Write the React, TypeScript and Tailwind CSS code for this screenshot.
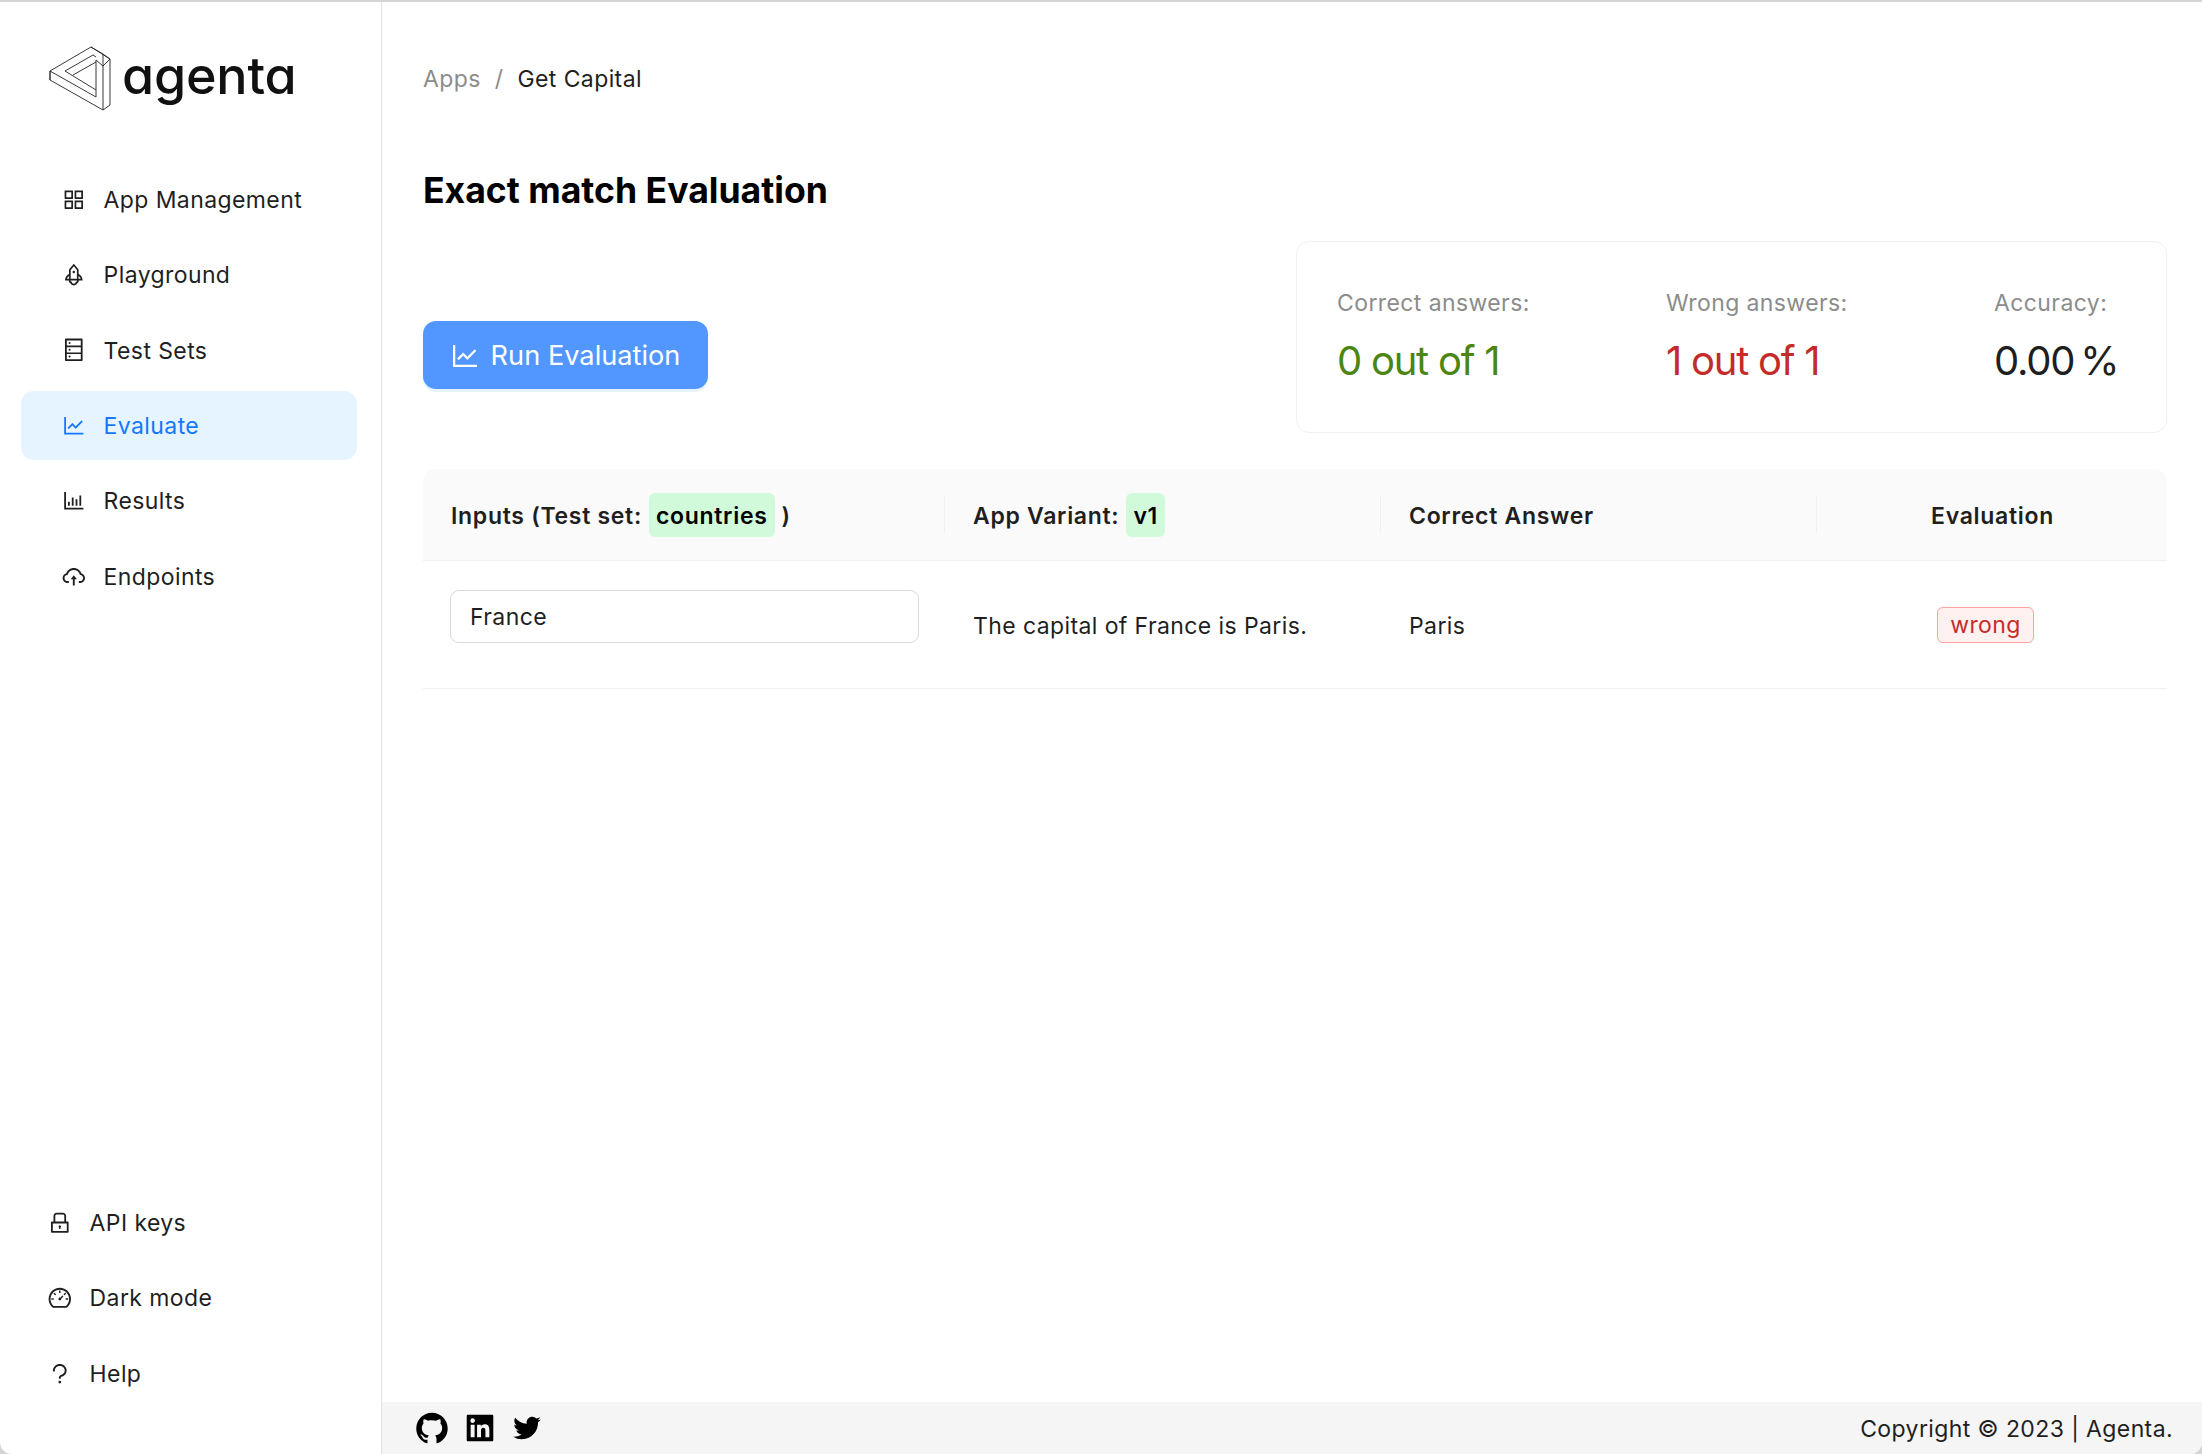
import type { ReactNode } from 'react';
import {
  AiOutlineAppstore,
  AiOutlineRocket,
  AiOutlineDatabase,
  AiOutlineLineChart,
  AiOutlineBarChart,
  AiOutlineCloudUpload,
  AiOutlineLock,
  AiOutlineDashboard,
  AiOutlineQuestion,
  AiOutlineGithub,
  AiFillLinkedin,
  AiOutlineTwitter,
} from 'react-icons/ai';

const topItems = [
  { label: 'App Management', icon: AiOutlineAppstore },
  { label: 'Playground', icon: AiOutlineRocket },
  { label: 'Test Sets', icon: AiOutlineDatabase },
  { label: 'Evaluate', icon: AiOutlineLineChart, active: true },
  { label: 'Results', icon: AiOutlineBarChart },
  { label: 'Endpoints', icon: AiOutlineCloudUpload },
];

const bottomItems = [
  { label: 'API keys', icon: AiOutlineLock },
  { label: 'Dark mode', icon: AiOutlineDashboard },
  { label: 'Help', icon: AiOutlineQuestion },
];

function Logo() {
  return (
    <div className="flex h-[66px] items-center gap-[11px] pl-[49px]">
      <svg viewBox="49 46 62 65" className="h-[65px] w-[62px] shrink-0" fill="none" stroke="#222" strokeWidth="0.9">
        <path d="M50 71 91 47 110 59V105L103 110 50 80Z" />
        <path d="M50 71 96 97V60M103 110V66L110 59M91 47 103 54 103 66M103 54 110 59M65 71 96 90M65 71 93 55 96 57M50 71 50 80M73 75 96 62M96 60 103 66" />
      </svg>
      <span className="-mt-[5px] text-[52px] leading-none font-medium tracking-[-0.2px] text-[#111] [font-feature-settings:'cv11']">
        agenta
      </span>
    </div>
  );
}

function MenuItem({ label, icon: Icon, active, compact }: { label: string; icon: typeof AiOutlineLock; active?: boolean; compact?: boolean }) {
  return (
    <div
      className={`flex h-[69px] items-center gap-[17px] rounded-[13px] ${compact ? 'pl-[26px]' : 'pl-[40px]'} ${
        active ? 'bg-[#e6f4ff] text-[#1677ff]' : 'text-[#1f1f1f]'
      }`}
    >
      <Icon className="size-[25.6px] shrink-0" />
      <span className="pt-px">{label}</span>
    </div>
  );
}

function HeaderCell({ children, className = '', divider = true }: { children: ReactNode; className?: string; divider?: boolean }) {
  return (
    <div className={`relative flex items-center pt-[3px] pl-[28px] ${className}`}>
      {children}
      {divider && <span className="absolute top-[27px] right-0 h-[37px] w-px bg-[#f0f0f0]" />}
    </div>
  );
}

function Stat({ label, value, color }: { label: string; value: string; color: string }) {
  return (
    <div>
      <div className="text-[23px] leading-[36px] tracking-[0.4px] text-[#8c8c8c]">{label}</div>
      <div className={`mt-[14px] text-[40px] leading-[52px] tracking-[-1.25px] ${color}`}>{value}</div>
    </div>
  );
}

export default function App() {
  return (
    <div className="h-screen w-full bg-[#d4d4d4] pt-[2px] font-['Inter',sans-serif] text-[23px] tracking-[0.4px] text-[#1f1f1f]">
      <div className="flex h-full overflow-hidden rounded-b-[12px] bg-white">
        {/* Sidebar */}
        <aside className="flex w-[382px] shrink-0 flex-col border-r border-[#e2e2e2] pt-[43px] pr-[24px] pb-[46px] pl-[21px]">
          <div className="-ml-[21px]">
            <Logo />
          </div>
          <nav className="mt-[54px] flex flex-col gap-[6.4px]">
            {topItems.map((item) => (
              <MenuItem key={item.label} {...item} />
            ))}
          </nav>
          <nav className="mt-auto flex flex-col gap-[6.4px]">
            {bottomItems.map((item) => (
              <MenuItem key={item.label} {...item} compact />
            ))}
          </nav>
        </aside>

        {/* Main */}
        <main className="flex min-w-0 flex-1 flex-col">
          <div className="flex-1 pt-[59px] pr-[35px] pl-[41px]">
            <div className="flex h-[36px] items-center">
              <span className="text-[#8c8c8c]">Apps</span>
              <span className="mx-[14px] text-[#8c8c8c]">/</span>
              <span>Get Capital</span>
            </div>
            <h1 className="mt-[70px] text-[35.6px] leading-[48px] font-bold tracking-normal text-black">Exact match Evaluation</h1>

            <div className="mt-[26px] flex items-start justify-between">
              <button className="mt-[80px] flex h-[68px] w-[285px] items-center justify-center gap-[10px] rounded-[13px] bg-[#5297ff] pt-[2px] pr-[2px] text-[27.2px] tracking-normal text-white shadow-[0_3px_0_rgba(5,145,255,0.1)]">
                <AiOutlineLineChart className="size-[32px]" />
                Run Evaluation
              </button>
              <div className="grid h-[192px] w-[871px] grid-cols-[329px_328px_1fr] content-center rounded-[13px] border border-[#f0f0f0] pb-[3px] pl-[40px]">
                <Stat label="Correct answers:" value="0 out of 1" color="text-[#4b8512]" />
                <Stat label="Wrong answers:" value="1 out of 1" color="text-[#c42b2b]" />
                <Stat label="Accuracy:" value="0.00 %" color="text-[#1f1f1f] [word-spacing:-4px]" />
              </div>
            </div>

            {/* Table */}
            <div className="mt-[36px]">
              <div className="grid h-[92px] grid-cols-[522px_436px_436px_1fr] rounded-t-[13px] border-b border-[#f0f0f0] bg-[#fafafa] font-semibold tracking-[0.7px]">
                <HeaderCell className="pl-[27px]">
                  Inputs (Test set:
                  <span className="mx-[7px] -mt-[3px] flex h-[44px] items-center rounded-[6px] bg-[#d1fadb] px-[7px] pt-[3px] text-black">countries</span>)
                </HeaderCell>
                <HeaderCell>
                  App Variant:
                  <span className="-mt-[3px] ml-[7px] flex h-[44px] items-center rounded-[6px] bg-[#d1fadb] px-[7px] pt-[3px] text-black">v1</span>
                </HeaderCell>
                <HeaderCell>Correct Answer</HeaderCell>
                <HeaderCell divider={false} className="justify-center pr-[27px]">
                  Evaluation
                </HeaderCell>
              </div>
              <div className="grid h-[128px] grid-cols-[522px_436px_436px_1fr] items-center border-b border-[#f0f0f0]">
                <div className="px-[27px] pb-[17px]">
                  <input
                    readOnly
                    value="France"
                    className="h-[53px] w-[469px] rounded-[9px] border border-[#d9d9d9] bg-white px-[19px] pt-px outline-none"
                  />
                </div>
                <div className="pt-[3px] pl-[28px]">The capital of France is Paris.</div>
                <div className="pt-[3px] pl-[28px]">Paris</div>
                <div className="flex pl-[120px]">
                  <span className="flex h-[36px] w-[97px] items-center justify-center rounded-[6px] border border-[#ffa39e] bg-[#fff1f0] pt-[2px] text-[#c42b2b]">wrong</span>
                </div>
              </div>
            </div>
          </div>

          {/* Footer */}
          <footer className="flex h-[52px] shrink-0 items-center justify-between bg-[#f5f5f5] pr-[29px] pl-[32px]">
            <div className="flex items-center gap-[13px] text-black">
              <AiOutlineGithub className="size-[36px]" />
              <AiFillLinkedin className="size-[34px]" />
              <AiOutlineTwitter className="size-[34px]" />
            </div>
            <span className="pt-[2px]">Copyright © 2023 | Agenta.</span>
          </footer>
        </main>
      </div>
    </div>
  );
}
